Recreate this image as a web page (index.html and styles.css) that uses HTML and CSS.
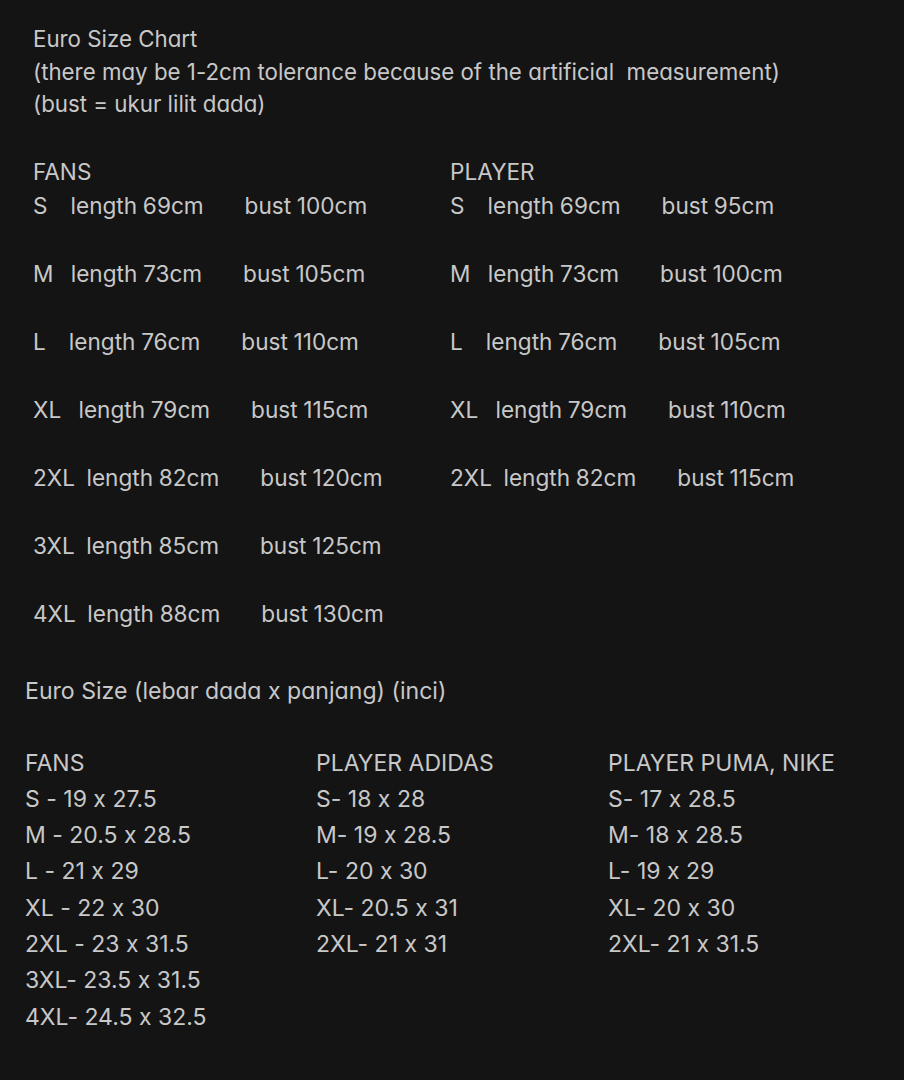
FILE: index.html
```html
<!DOCTYPE html>
<html lang="en">
<head>
<meta charset="utf-8">
<title>Euro Size Chart</title>
<link rel="stylesheet" href="styles.css">
</head>
<body>
<main class="page">
  <section class="cm">
    <div class="intro">
      <p>Euro Size Chart</p>
      <p>(there may be 1-2cm tolerance because of the artificial  measurement)</p>
      <p>(bust = ukur lilit dada)</p>
    </div>
    <div class="cm-grid">
      <div class="cm-col">
        <p class="cm-head">FANS</p>
        <p class="cm-row">S    length 69cm<span class="bust">bust 100cm</span></p>
        <p class="cm-row">M   length 73cm<span class="bust">bust 105cm</span></p>
        <p class="cm-row">L    length 76cm<span class="bust">bust 110cm</span></p>
        <p class="cm-row">XL   length 79cm<span class="bust">bust 115cm</span></p>
        <p class="cm-row">2XL  length 82cm<span class="bust">bust 120cm</span></p>
        <p class="cm-row">3XL  length 85cm<span class="bust">bust 125cm</span></p>
        <p class="cm-row">4XL  length 88cm<span class="bust">bust 130cm</span></p>
      </div>
      <div class="cm-col">
        <p class="cm-head">PLAYER</p>
        <p class="cm-row">S    length 69cm<span class="bust">bust 95cm</span></p>
        <p class="cm-row">M   length 73cm<span class="bust">bust 100cm</span></p>
        <p class="cm-row">L    length 76cm<span class="bust">bust 105cm</span></p>
        <p class="cm-row">XL   length 79cm<span class="bust">bust 110cm</span></p>
        <p class="cm-row">2XL  length 82cm<span class="bust">bust 115cm</span></p>
      </div>
    </div>
  </section>
  <section class="inch">
    <p class="inch-title">Euro Size (lebar dada x panjang) (inci)</p>
    <div class="inch-grid">
      <div class="inch-col">
        <p>FANS</p>
        <p>S - 19 x 27.5</p>
        <p>M - 20.5 x 28.5</p>
        <p>L - 21 x 29</p>
        <p>XL - 22 x 30</p>
        <p>2XL - 23 x 31.5</p>
        <p>3XL- 23.5 x 31.5</p>
        <p>4XL- 24.5 x 32.5</p>
      </div>
      <div class="inch-col">
        <p>PLAYER ADIDAS</p>
        <p>S- 18 x 28</p>
        <p>M- 19 x 28.5</p>
        <p>L- 20 x 30</p>
        <p>XL- 20.5 x 31</p>
        <p>2XL- 21 x 31</p>
      </div>
      <div class="inch-col">
        <p>PLAYER PUMA, NIKE</p>
        <p>S- 17 x 28.5</p>
        <p>M- 18 x 28.5</p>
        <p>L- 19 x 29</p>
        <p>XL- 20 x 30</p>
        <p>2XL- 21 x 31.5</p>
      </div>
    </div>
  </section>
</main>
</body>
</html>
```

FILE: styles.css
```css
html, body {
  margin: 0;
  padding: 0;
  background: #141414;
}

body {
  width: 904px;
  height: 1080px;
  overflow: hidden;
  color: #c8c8c8;
  font-family: Inter, "Open Sans", "Liberation Sans", sans-serif;
  font-feature-settings: "cv11" 1, "calt" 0;
  font-variant-ligatures: no-contextual;
}

p {
  margin: 0;
  white-space: pre;
}

.page {
  padding: 23px 0 0 25px;
}

.cm {
  padding-left: 8px;
}

.intro {
  font-size: 22.3px;
  line-height: 32.5px;
}

.cm-grid {
  display: grid;
  grid-template-columns: 417px 1fr;
  margin-top: 34px;
  font-size: 22.6px;
  line-height: 34px;
}

.cm-row {
  margin-bottom: 34px;
  word-spacing: -0.6px;
}

.bust {
  margin-left: 41px;
}

.inch {
  margin-top: 8px;
}

.inch-title {
  font-size: 23.1px;
  line-height: 36px;
}

.inch-grid {
  display: grid;
  grid-template-columns: 291px 292px 1fr;
  margin-top: 36px;
  font-size: 23px;
  line-height: 36.3px;
}
```
